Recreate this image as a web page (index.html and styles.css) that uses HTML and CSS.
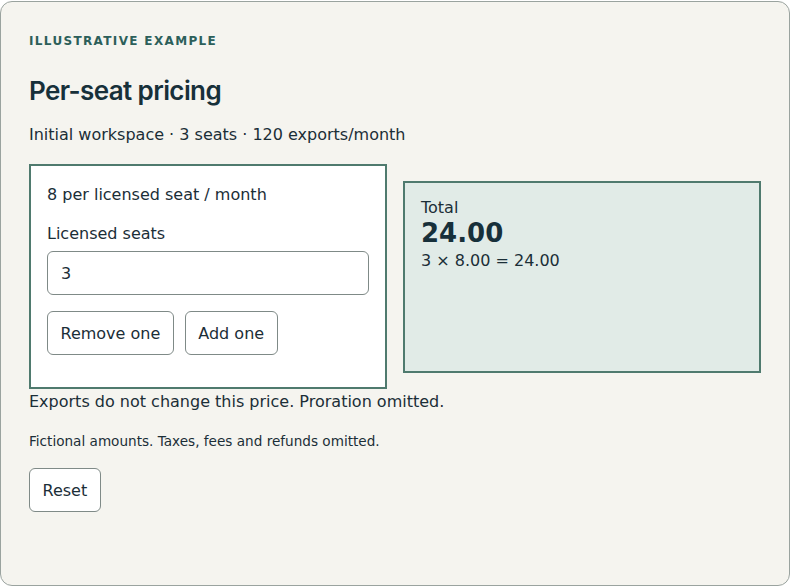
FILE: index.html
```html
<!DOCTYPE html>
<html lang="en">
<head>
<meta charset="utf-8">
<title>Per-seat pricing</title>
<link rel="stylesheet" href="styles.css">
</head>
<body>
<main class="card">
  <p class="eyebrow">ILLUSTRATIVE EXAMPLE</p>
  <h1 class="title">Per-seat pricing</h1>
  <p class="subtitle">Initial workspace · 3 seats · 120 exports/month</p>
  <div class="grid">
    <section class="panel">
      <p class="rate">8 per licensed seat / month</p>
      <label class="label" for="seats">Licensed seats</label>
      <input class="input" id="seats" type="text" value="3">
      <div class="actions">
        <button class="btn" type="button">Remove one</button>
        <button class="btn" type="button">Add one</button>
      </div>
    </section>
    <section class="total">
      <div class="total-label">Total</div>
      <div class="total-value">24.00</div>
      <div class="total-calc">3 × 8.00 = 24.00</div>
    </section>
  </div>
  <p class="note">Exports do not change this price. Proration omitted.</p>
  <p class="fine">Fictional amounts. Taxes, fees and refunds omitted.</p>
  <button class="btn" type="button">Reset</button>
</main>
</body>
</html>
```

FILE: styles.css
```css
* { box-sizing: border-box; }
html, body { margin: 0; padding: 0; background: #ffffff; }
body {
  font-family: "DejaVu Sans", sans-serif;
  color: #1b2e37;
  padding-top: 1px;
}
.card {
  width: 790px;
  height: 585px;
  background: #f5f4ef;
  border: 1px solid #9aa39f;
  border-radius: 12px;
  padding: 28px 28px;
}
.eyebrow {
  margin: 3px 0 0;
  font-size: 12px;
  font-weight: 700;
  letter-spacing: 1.35px;
  color: #2c5f5a;
  line-height: 16px;
}
.title {
  margin: 25px 0 0;
  font-family: "Inter", sans-serif;
  font-weight: 600;
  font-size: 26px;
  letter-spacing: -0.6px;
  line-height: 34px;
  color: #17303a;
}
.subtitle {
  margin: 16px 0 0;
  font-size: 16px;
  line-height: 22px;
}
.grid {
  margin-top: 18px;
  display: grid;
  grid-template-columns: 1fr 1fr;
  gap: 16px;
  align-items: center;
}
.panel {
  background: #ffffff;
  border: 2px solid #4f7a6e;
  padding: 18px 16px 32px;
}
.rate {
  margin: 0;
  font-size: 16px;
  line-height: 22px;
}
.label {
  display: block;
  margin-top: 17px;
  font-size: 16px;
  line-height: 22px;
}
.input {
  display: block;
  width: 100%;
  height: 44px;
  margin-top: 6px;
  padding: 0 13px;
  border: 1px solid #7f8a87;
  border-radius: 6px;
  font-family: "DejaVu Sans", sans-serif;
  font-size: 16px;
  color: #1b2e37;
  background: #fff;
}
.actions {
  display: flex;
  gap: 11px;
  margin-top: 16px;
}
.btn {
  height: 44px;
  padding: 0 12.5px;
  border: 1px solid #7f8a87;
  border-radius: 6px;
  background: #ffffff;
  font-family: "DejaVu Sans", sans-serif;
  font-size: 16px;
  color: #1b2e37;
}
.total {
  min-height: 192px;
  background: #e1ebe7;
  border: 2px solid #4f7a6e;
  padding: 15px 16px;
}
.total-label {
  font-size: 16px;
  line-height: 20px;
}
.total-value {
  font-size: 26px;
  font-weight: 700;
  line-height: 30px;
  color: #17303a;
}
.total-calc {
  font-size: 16px;
  line-height: 26px;
}
.note {
  margin: 0;
  font-size: 16px;
  line-height: 26px;
}
.fine {
  margin: 16px 0 17px;
  font-size: 13.6px;
  line-height: 20px;
}
```
